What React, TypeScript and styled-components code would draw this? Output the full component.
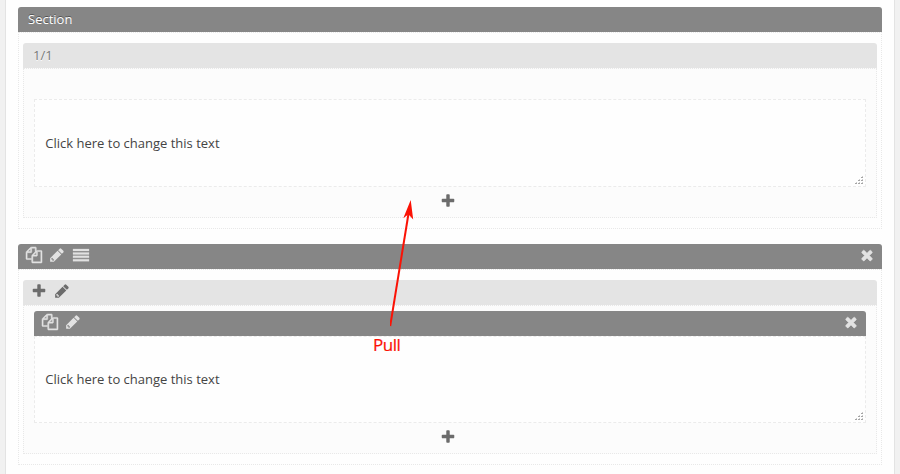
import React from "react";
import styled, { createGlobalStyle } from "styled-components";

const GlobalStyle = createGlobalStyle`
  * { box-sizing: border-box; }
  body {
    margin: 0;
    background: #f1f1f1;
    font: 13px/20px "Open Sans", sans-serif;
    color: #444;
    overflow: hidden;
  }
`;

const Page = styled.main`
  position: relative;
  width: 890px;
  height: 474px;
  margin-left: 5px;
  padding: 7px 12px 0;
  background: #fefefe;
  border: solid #e3e3e3;
  border-width: 0 1px;
  display: flex;
  flex-direction: column;
  gap: 15px;
`;

const Section = styled.section`
  display: flex;
  flex-direction: column;
`;

const Bar = styled.header<{ $tone: "dark" | "light"; $inset: number }>`
  flex: none;
  display: flex;
  align-items: center;
  height: 25px;
  padding: 0 7px 2px ${(p) => p.$inset}px;
  border-radius: 3px 3px 0 0;
  background: ${(p) => (p.$tone === "dark" ? "#868686" : "#e4e4e4")};
  color: ${(p) => (p.$tone === "dark" ? "#e2e2e2" : "#6c6c6c")};
`;

const Title = styled.span<{ $dark?: boolean }>`
  color: ${(p) => (p.$dark ? "#fff" : "#777")};
  text-shadow: ${(p) => (p.$dark ? "0 -1px 0 #555" : "0 1px 0 #fff")};
`;

const SectionBody = styled.div<{ $height: number }>`
  height: ${(p) => p.$height}px;
  padding: 10px 4px;
  border: 1px dotted #e8e8e8;
  background: #fefefe;
`;

const ColumnBody = styled.div<{ $top: number; $height: number }>`
  height: ${(p) => p.$height}px;
  padding: ${(p) => p.$top}px 10px 0;
  border: 1px dotted #e8e8e8;
  background: #fcfcfc;
`;

const TextBlock = styled.div<{ $height: number; $top: number }>`
  position: relative;
  height: ${(p) => p.$height}px;
  padding: ${(p) => p.$top}px 0 0 10.3px;
  border: 1px dashed #ebebeb;
  background: #fefefe;
`;

const Grip = styled.svg`
  position: absolute;
  right: 2px;
  bottom: 2px;
`;

const AddRow = styled.div<{ $top: number }>`
  display: flex;
  justify-content: center;
  padding: ${(p) => p.$top}px 3.4px 0 0;
  color: #6c6c6c;
`;

const Glyph = styled.svg<{ $gap?: number; $end?: boolean; $weight: number }>`
  display: block;
  flex: none;
  width: 16px;
  height: 16px;
  fill: currentColor;
  stroke: currentColor;
  stroke-width: ${(p) => p.$weight};
  margin-bottom: 1px;
  margin-left: ${(p) => (p.$end ? "auto" : `${p.$gap ?? 0}px`)};
`;

const Arrow = styled.svg`
  position: absolute;
  left: 384px;
  top: 196px;
`;

const PullLabel = styled.span`
  position: absolute;
  left: 367px;
  top: 335px;
  font-size: 17px;
  letter-spacing: -0.45px;
  color: #fb1205;
  -webkit-text-stroke: 0.2px #fb1205;
`;

const paths = {
  copy: "M1696 384q40 0 68 28t28 68v1216q0 40-28 68t-68 28h-960q-40 0-68-28t-28-68v-288h-544q-40 0-68-28t-28-68v-672q0-40 20-88t48-76l408-408q28-28 76-48t88-20h416q40 0 68 28t28 68v328q68-40 128-40h416zm-544 213l-299 299h299v-299zm-640-384l-299 299h299v-299zm196 647l316-316v-416h-384v416q0 40-28 68t-68 28h-416v640h512v-256q0-40 20-88t48-76zm956 804v-1152h-384v416q0 40-28 68t-68 28h-416v640h896z",
  pencil: "M491 1536l91-91-235-235-91 91v107h128v128h107zM960 416l416 416-832 832h-416v-416zm683 96q0 53-37 90l-166 166-416-416 166-165q36-38 90-38 53 0 91 38l235 234q37 39 37 91z",
  plus: "M1600 736v192q0 40-28 68t-68 28h-416v416q0 40-28 68t-68 28h-192q-40 0-68-28t-28-68v-416h-416q-40 0-68-28t-28-68v-192q0-40 28-68t68-28h416v-416q0-40 28-68t68-28h192q40 0 68 28t28 68v416h416q40 0 68 28t28 68z",
  close: "M1490 1322q0 40-28 68l-136 136q-28 28-68 28t-68-28l-294-294-294 294q-28 28-68 28t-68-28l-136-136q-28-28-28-68t28-68l294-294-294-294q-28-28-28-68t28-68l136-136q28-28 68-28t68 28l294 294 294-294q28-28 68-28t68 28l136 136q28 28 28 68t-28 68l-294 294 294 294q28 28 28 68z",
  lines: "M0 224h1792v224H0zM0 608h1792v224H0zM0 992h1792v224H0zM0 1376h1792v224H0z",
};

const weights: Record<keyof typeof paths, number> = {
  copy: 55,
  pencil: 0,
  plus: 0,
  close: 60,
  lines: 30,
};

type IconProps = { name: keyof typeof paths; gap?: number; end?: boolean };

const Icon = ({ name, gap, end }: IconProps) => (
  <Glyph
    viewBox="0 0 1792 1792"
    overflow="visible"
    $gap={gap}
    $end={end}
    $weight={weights[name]}
    aria-hidden="true"
  >
    <path d={paths[name]} fillRule={name === "pencil" ? "evenodd" : "nonzero"} />
  </Glyph>
);

const gripDots = [[6, 0], [3, 3], [6, 3], [0, 6], [3, 6], [6, 6]];

const EditableText = ({ height, top }: { height: number; top: number }) => (
  <TextBlock $height={height} $top={top}>
    Click here to change this text
    <Grip width="8" height="8">
      {gripDots.map(([x, y]) => (
        <React.Fragment key={`${x}-${y}`}>
          <rect x={x + 1} y={y} width="1" height="1" fill="#ccc" />
          <rect x={x} y={y + 1} width="2" height="1" fill="#a5a5a5" />
        </React.Fragment>
      ))}
    </Grip>
  </TextBlock>
);

export default function App() {
  return (
    <>
      <GlobalStyle />
      <Page>
        <Section>
          <Bar $tone="dark" $inset={10}>
            <Title $dark>Section</Title>
          </Bar>
          <SectionBody $height={197}>
            <Bar $tone="light" $inset={10}>
              <Title>1/1</Title>
            </Bar>
            <ColumnBody $top={30} $height={150}>
              <EditableText height={88} top={33} />
              <AddRow $top={5.5}><Icon name="plus" /></AddRow>
            </ColumnBody>
          </SectionBody>
        </Section>
        <Section>
          <Bar $tone="dark" $inset={8}>
            <Icon name="copy" />
            <Icon name="pencil" gap={7} />
            <Icon name="lines" gap={8} />
            <Icon name="close" end />
          </Bar>
          <SectionBody $height={196}>
            <Bar $tone="light" $inset={8}>
              <Icon name="plus" />
              <Icon name="pencil" gap={7} />
            </Bar>
            <ColumnBody $top={5} $height={149}>
              <Bar $tone="dark" $inset={8}>
                <Icon name="copy" />
                <Icon name="pencil" gap={7} />
                <Icon name="close" end />
              </Bar>
              <EditableText height={87} top={32} />
              <AddRow $top={6.3}><Icon name="plus" /></AddRow>
            </ColumnBody>
          </SectionBody>
        </Section>
        <Arrow width="32" height="134">
          <path d="M0.2 130L18.6 17" stroke="#fb1205" strokeWidth="2" fill="none" />
          <path d="M20.7 4L23.2 23.5L18.4 18.2L13.3 22.3Z" fill="#fb1205" />
        </Arrow>
        <PullLabel>Pull</PullLabel>
      </Page>
    </>
  );
}
